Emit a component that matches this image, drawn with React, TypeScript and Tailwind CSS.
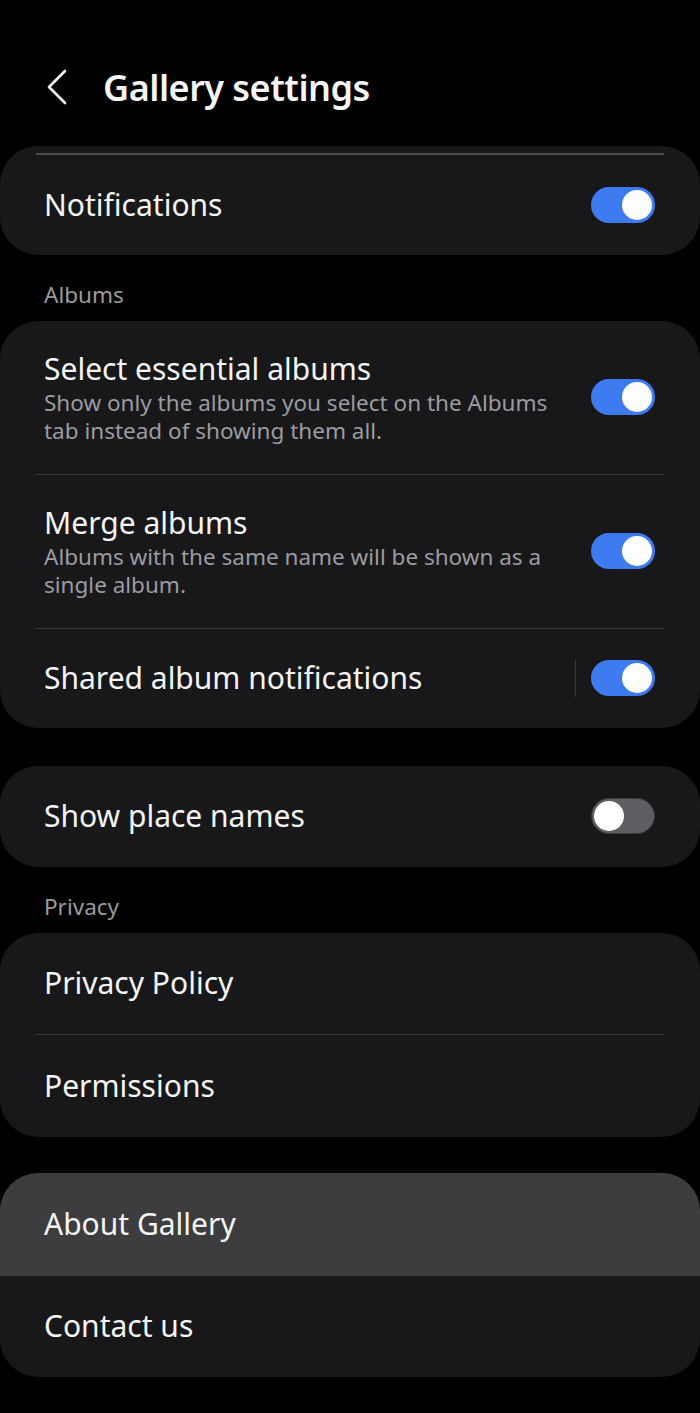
import React from "react";

function Toggle({ on }: { on: boolean }) {
  return on ? (
    <div className="flex h-[36px] w-[64px] items-center justify-end rounded-full bg-[#3e7bf0] pr-[3px]">
      <div className="h-[30px] w-[30px] rounded-full bg-white" />
    </div>
  ) : (
    <div className="flex h-[36px] w-[64px] items-center justify-start rounded-full border border-[#3a3a3e] bg-[#5e5e63] pl-[2px]">
      <div className="h-[30px] w-[30px] rounded-full bg-white" />
    </div>
  );
}

function Divider() {
  return <div className="mx-[36px] h-px bg-[#3a3a3d]" />;
}

function Row({
  title,
  sub,
  toggle,
  h,
  vline,
  bg,
}: {
  title: string;
  sub?: string[];
  toggle?: boolean;
  h: string;
  vline?: boolean;
  bg?: string;
}) {
  return (
    <div className={`flex items-center pl-[44px] pr-[45px] ${h} ${bg ?? ""}`}>
      <div className="flex flex-1 flex-col">
        <div className="text-[30px] leading-[40px] text-[#f5f5f5]">{title}</div>
        {sub && (
          <div className="text-[22.5px] leading-[28px] text-[#9b9ba0]">
            {sub.map((s) => (
              <div key={s}>{s}</div>
            ))}
          </div>
        )}
      </div>
      {vline && <div className="mr-[15px] h-[37px] w-px bg-[#3a3a3d]" />}
      {toggle !== undefined && <Toggle on={toggle} />}
    </div>
  );
}

function Header({ children }: { children: React.ReactNode }) {
  return (
    <div className="flex h-[66px] items-center pl-[44px] pt-[14px] text-[22.5px] text-[#9b9b9b]">
      {children}
    </div>
  );
}

export default function App() {
  return (
    <div
      className="min-h-[1413px] w-[700px] bg-black"
      style={{ fontFamily: "'Noto Sans', 'Open Sans', sans-serif" }}
    >
      <div className="flex h-[146px] items-start pt-[64px]">
        <svg width="24" height="36" viewBox="0 0 24 36" className="ml-[45px] mt-[5px]">
          <path d="M20 2 L4 18 L20 34" stroke="#f2f2f2" strokeWidth="2.6" fill="none" strokeLinecap="round" strokeLinejoin="round" />
        </svg>
        <div className="ml-[34px] text-[36px] font-semibold leading-[48px] tracking-[-0.5px] text-[#f5f5f5]">
          Gallery settings
        </div>
      </div>

      <div className="overflow-hidden rounded-[38px] bg-[#18181a]">
        <div className="mt-[7px] mx-[36px] h-[1.5px] bg-[#4a4a4d]" />
        <Row title="Notifications" toggle={true} h="h-[100px]" />
      </div>

      <Header>Albums</Header>

      <div className="overflow-hidden rounded-[38px] bg-[#18181a]">
        <Row
          title="Select essential albums"
          sub={["Show only the albums you select on the Albums", "tab instead of showing them all."]}
          toggle={true}
          h="h-[153px]"
        />
        <Divider />
        <Row
          title="Merge albums"
          sub={["Albums with the same name will be shown as a", "single album."]}
          toggle={true}
          h="h-[153px]"
        />
        <Divider />
        <Row title="Shared album notifications" toggle={true} vline h="h-[99px]" />
      </div>

      <div className="h-[38px]" />

      <div className="overflow-hidden rounded-[38px] bg-[#18181a]">
        <Row title="Show place names" toggle={false} h="h-[101px]" />
      </div>

      <Header>Privacy</Header>

      <div className="overflow-hidden rounded-[38px] bg-[#18181a]">
        <Row title="Privacy Policy" h="h-[101px]" />
        <Divider />
        <Row title="Permissions" h="h-[102px]" />
      </div>

      <div className="h-[36px]" />

      <div className="overflow-hidden rounded-[38px] bg-[#18181a]">
        <Row title="About Gallery" h="h-[103px]" bg="bg-[#3d3d3f]" />
        <Row title="Contact us" h="h-[101px]" />
      </div>
    </div>
  );
}
